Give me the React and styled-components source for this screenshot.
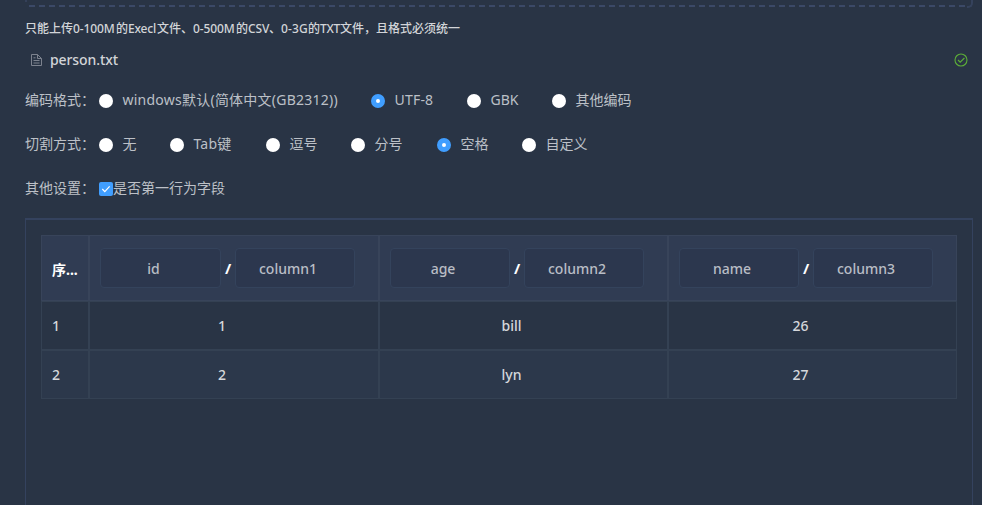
import React from "react";
import styled, { createGlobalStyle } from "styled-components";

const Global = createGlobalStyle`
  * { box-sizing: border-box; }
  body {
    margin: 0;
    background: #293445;
    overflow: hidden;
    font-family: "Noto Sans", "Noto Sans CJK SC", sans-serif;
    font-size: 14px;
    color: #bcc0c7;
  }
`;

const Page = styled.main`
  height: 505px;
  padding: 0 9px 0 25px;
  overflow: hidden;
  display: flex;
  flex-direction: column;
`;

const DropZoneEdge = styled.div`
  flex: none;
  height: 7px;
  display: flex;
  justify-content: space-between;
  background: repeating-linear-gradient(90deg, #3b4967 0 6px, transparent 6px 10px) 4px 5px / 938px 2px no-repeat;
  &::before {
    content: "";
    width: 2px;
    height: 2px;
    background: #344059;
  }
  &::after {
    content: "";
    width: 4px;
    height: 6px;
    border: solid #35425c;
    border-width: 0 2px 2px 0;
    border-bottom-right-radius: 5px;
  }
`;

const Hint = styled.p`
  flex: none;
  display: flex;
  margin: 12px 0 0;
  height: 20px;
  line-height: 20px;
  font-size: 12px;
  font-weight: 500;
  color: #d2d4d8;
  white-space: nowrap;
`;

const Run = styled.span`
  flex: none;
  width: ${(p) => p.$w}px;
  letter-spacing: ${(p) => p.$ls || 0}px;
`;

const FileRow = styled.div`
  flex: none;
  height: 24px;
  margin-top: 9px;
  display: flex;
  align-items: center;
  padding: 0 5px;
`;

const FileName = styled.span`
  margin: -2px 0 0 8px;
  flex: 1;
  font-weight: 500;
  letter-spacing: -0.1px;
  color: #d2d4d8;
`;

const FormRow = styled.div`
  flex: none;
  height: 44px;
  display: flex;
  align-items: center;
`;

const FormRows = styled.div`
  flex: none;
  padding-top: 5px;
`;

const FieldLabel = styled.span`
  width: 74px;
  white-space: nowrap;
`;

const Option = styled.label`
  display: flex;
  align-items: center;
  width: ${(p) => p.$w}px;
  white-space: nowrap;
  letter-spacing: ${(p) => p.$ls || 0}px;
`;

const Dot = styled.span`
  flex: none;
  width: 14px;
  height: 14px;
  margin: 3px 9.5px 0 0;
  border-radius: 50%;
  border: ${(p) => (p.$on ? "5px solid #409eff" : "0")};
  background: #fff;
`;

const CheckBox = styled.span`
  flex: none;
  width: 14px;
  height: 14px;
  margin-top: 3px;
  border-radius: 2px;
  background: #409eff;
  display: flex;
`;

const Panel = styled.section`
  flex: none;
  height: 320px;
  margin-top: 9px;
  padding: 15px;
  border: 1px solid #34425e;
  border-top-width: 2px;
`;

const Table = styled.div`
  display: grid;
  grid-template-columns: 48px 290px 289px 289px;
  grid-template-rows: 66px 49px 49px;
`;

const HeadCell = styled.div`
  display: flex;
  align-items: center;
  padding: 0 10px;
  border: 1px solid #38445a;
  background: #303c53;
  color: #fff;
  font-weight: 700;
`;

const IndexTitle = styled.span`
  font-size: 14px;
  margin-top: 1px;
  white-space: nowrap;
`;

const Slash = styled.span`
  width: 14px;
  text-align: center;
  font-size: 15px;
`;

const Input = styled.div`
  width: ${(p) => (p.$wide ? 121 : 120)}px;
  height: 40px;
  padding-right: 14px;
  border: 1px solid #34435c;
  border-radius: 4px;
  background: #2c374e;
  color: #b9bdc5;
  font-weight: 500;
  line-height: 39px;
  text-align: center;
`;

const Cell = styled.div`
  padding: ${(p) => (p.$index ? "0 10px" : "0 24px 0 0")};
  text-align: ${(p) => (p.$index ? "left" : "center")};
  line-height: 47px;
  border: 1px solid #344153;
  background: ${(p) => (p.$striped ? "#2c384b" : "#293445")};
  color: #d5d7db;
  font-weight: 500;
`;

const encodings = [
  { text: "windows默认(简体中文(GB2312))", w: 272, ls: 0.24 },
  { text: "UTF-8", w: 96, ls: 0.2 },
  { text: "GBK", w: 85 },
  { text: "其他编码", w: 90 },
];
encodings[1].on = true;

const separators = [
  { text: "无", w: 71 },
  { text: "Tab键", w: 96, ls: 0.2 },
  { text: "逗号", w: 85 },
  { text: "分号", w: 86 },
  { text: "空格", w: 85, on: true },
  { text: "自定义", w: 80 },
];

const columns = [
  ["id", "column1"],
  ["age", "column2"],
  ["name", "column3"],
];

const rows = [
  ["1", "1", "bill", "26"],
  ["2", "2", "lyn", "27"],
];

const FileIcon = () => (
  <svg width="12" height="14" viewBox="0 0 12 14" fill="none" stroke="#7c828e">
    <path d="M1.5 1.5h6l4 4v7h-10zM7.5 1.5v4h4M3.5 7.5h6M3.5 10h6M3.5 4.8h2" />
  </svg>
);

const SuccessIcon = () => (
  <svg width="14" height="14" viewBox="0 0 14 14" fill="none" stroke="#5cae38" strokeWidth="1.1">
    <circle cx="7" cy="7" r="6" />
    <path d="M4 7l2.2 2.2L10.4 5" />
  </svg>
);

const Radios = ({ label, items }) => (
  <FormRow>
    <FieldLabel>{label}</FieldLabel>
    {items.map((o) => (
      <Option key={o.text} $w={o.w} $ls={o.ls}>
        <Dot $on={o.on} />
        {o.text}
      </Option>
    ))}
  </FormRow>
);

export default function App() {
  return (
    <Page>
      <Global />
      <DropZoneEdge />
      <Hint>
        <Run $w={48}>只能上传</Run>
        <Run $w={43} $ls={-0.1}>0-100M</Run>
        <Run $w={12}>的</Run>
        <Run $w={29} $ls={-0.2}>Execl</Run>
        <Run $w={36}>文件、</Run>
        <Run $w={43} $ls={-0.1}>0-500M</Run>
        <Run $w={12}>的</Run>
        <Run $w={21} $ls={-0.1}>CSV</Run>
        <Run $w={12}>、</Run>
        <Run $w={27} $ls={0.1}>0-3G</Run>
        <Run $w={12}>的</Run>
        <Run $w={20} $ls={-0.3}>TXT</Run>
        <Run $w={120}>文件，且格式必须统一</Run>
      </Hint>
      <FileRow>
        <FileIcon />
        <FileName>person.txt</FileName>
        <SuccessIcon />
      </FileRow>
      <FormRows>
        <Radios label="编码格式：" items={encodings} />
        <Radios label="切割方式：" items={separators} />
        <FormRow>
          <FieldLabel>其他设置：</FieldLabel>
          <CheckBox>
            <svg width="14" height="14" viewBox="0 0 14 14" fill="none" stroke="#fff" strokeWidth="1.2">
              <path d="M3.3 7l2.5 2.6L10.6 4.3" />
            </svg>
          </CheckBox>
          是否第一行为字段
        </FormRow>
      </FormRows>
      <Panel>
        <Table>
          <HeadCell>
            <IndexTitle>序...</IndexTitle>
          </HeadCell>
          {columns.map(([name, source], i) => (
            <HeadCell key={source}>
              <Input $wide={i === 0}>{name}</Input>
              <Slash>/</Slash>
              <Input>{source}</Input>
            </HeadCell>
          ))}
          {rows.map((row, r) =>
            row.map((value, c) => (
              <Cell key={`${r}-${c}`} $index={c === 0} $striped={r === 1}>
                {value}
              </Cell>
            ))
          )}
        </Table>
      </Panel>
    </Page>
  );
}
